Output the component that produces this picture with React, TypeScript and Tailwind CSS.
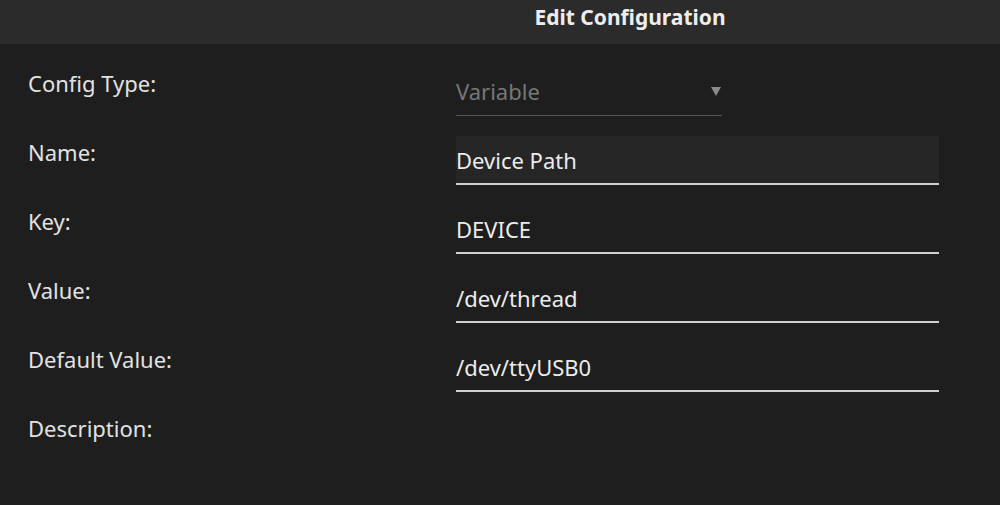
const FIELDS = [
  { label: 'Name:', value: 'Device Path', focused: true },
  { label: 'Key:', value: 'DEVICE' },
  { label: 'Value:', value: '/dev/thread' },
  { label: 'Default Value:', value: '/dev/ttyUSB0' },
]

function Label({ children }: { children: React.ReactNode }) {
  return <div className="w-[428px] shrink-0 pt-[1px] text-[22px] leading-[30px] text-[#e2e2e2]">{children}</div>
}

function TextField({ value, focused }: { value: string; focused?: boolean }) {
  return (
    <div
      className={`flex h-[49px] w-[483px] items-center border-b-2 border-[#cfcfcf] ${focused ? 'bg-[#262626]' : ''}`}
    >
      <span className="text-[22px] leading-[30px] text-[#ececec]">{value}</span>
    </div>
  )
}

export default function App() {
  return (
    <div className="flex h-[505px] w-full flex-col bg-[#1e1e1e] font-['Noto_Sans',sans-serif]">
      <div className="flex h-[44px] shrink-0 items-start justify-center bg-[#2b2b2b] pl-[260px] pt-[3px]">
        <h1 className="text-[21px] leading-[28px] font-bold text-[#ededed]">Edit Configuration</h1>
      </div>

      <div className="flex flex-col gap-[20px] pl-[28px] pt-[23px]">
        <div className="flex items-start">
          <Label>Config Type:</Label>
          <div className="flex h-[49px] w-[266px] items-center justify-between border-b border-[#555555]">
            <span className="text-[22px] leading-[30px] text-[#777777]">Variable</span>
            <svg width="10" height="9" viewBox="0 0 10 9" className="mr-[1px] mt-[1px]">
              <path d="M0 0h10L5 9z" fill="#8a8a8a" />
            </svg>
          </div>
        </div>

        {FIELDS.map((f) => (
          <div key={f.label} className="flex items-start">
            <Label>{f.label}</Label>
            <TextField value={f.value} focused={f.focused} />
          </div>
        ))}

        <div className="flex items-start">
          <Label>Description:</Label>
        </div>
      </div>
    </div>
  )
}
